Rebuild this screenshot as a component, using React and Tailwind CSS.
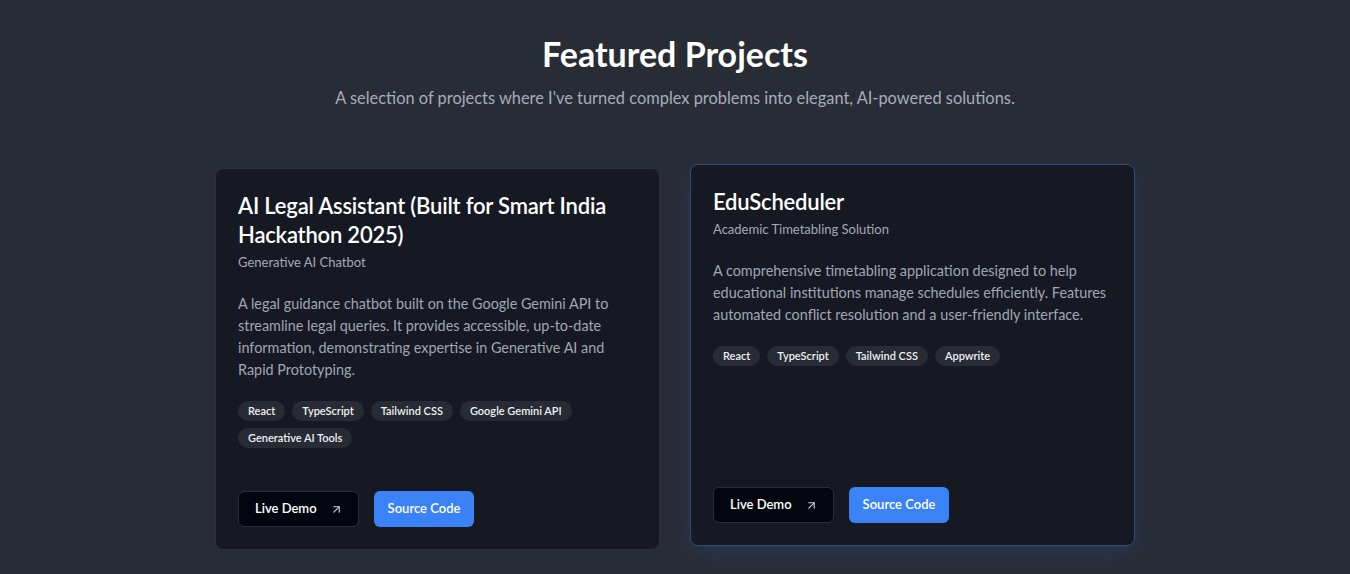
import React from "react";
import { ArrowUpRight } from "lucide-react";

const projects = [
  {
    title: "AI Legal Assistant (Built for Smart India Hackathon 2025)",
    subtitle: "Generative AI Chatbot",
    desc: "A legal guidance chatbot built on the Google Gemini API to streamline legal queries. It provides accessible, up-to-date information, demonstrating expertise in Generative AI and Rapid Prototyping.",
    tags: ["React", "TypeScript", "Tailwind CSS", "Google Gemini API", "Generative AI Tools"],
    active: false,
  },
  {
    title: "EduScheduler",
    subtitle: "Academic Timetabling Solution",
    desc: "A comprehensive timetabling application designed to help educational institutions manage schedules efficiently. Features automated conflict resolution and a user-friendly interface.",
    tags: ["React", "TypeScript", "Tailwind CSS", "Appwrite"],
    active: true,
  },
];

function Card({ p }) {
  return (
    <div
      className={
        "flex flex-col rounded-lg border bg-[#161922] px-[22px] pt-[22px] pb-[22px] " +
        (p.active
          ? "-translate-y-1 border-[#2c4c8a] shadow-[0_8px_24px_rgba(59,130,246,0.12)]"
          : "border-[#2e323c]")
      }
    >
      <h3 className="text-[22px] leading-[29px] font-semibold tracking-[-0.2px] text-white">{p.title}</h3>
      <p className="mt-[3px] text-[13px] leading-5 text-[#a3aab6]">{p.subtitle}</p>
      <p className="mt-[21px] text-[14.4px] leading-[22px] text-[#a0a6b2]">{p.desc}</p>
      <div className="mt-5 flex flex-wrap gap-x-[7px] gap-y-[7px]">
        {p.tags.map((t) => (
          <span
            key={t}
            className="rounded-full bg-[#272b34] px-[10px] text-[11px] leading-[20px] font-semibold text-[#eef0f3]"
          >
            {t}
          </span>
        ))}
      </div>
      <div className="mt-auto flex items-center gap-[15px] pt-[43px]">
        <button className="flex h-[36px] items-center gap-[13px] rounded-md border border-[#2a2e38] bg-[#03060f] pl-4 pr-[15px] text-[13px] font-semibold text-white">
          Live Demo
          <ArrowUpRight size={13} strokeWidth={2} className="text-gray-300" />
        </button>
        <button className="h-[36px] rounded-md bg-[#3b82f6] px-[14px] text-[13px] font-semibold text-white">
          Source Code
        </button>
      </div>
    </div>
  );
}

export default function App() {
  return (
    <div
      className="min-h-[574px] w-full bg-[#282c35] pt-[34px]"
      style={{ fontFamily: "Lato, 'Noto Sans', sans-serif" }}
    >
      <div className="flex flex-col items-center">
        <h2 className="text-[34px] leading-[40px] font-bold text-white">Featured Projects</h2>
        <p className="mt-3 text-[16.4px] leading-6 text-[#a7adb9]">
          A selection of projects where I've turned complex problems into elegant, AI-powered solutions.
        </p>
      </div>
      <div className="mx-auto mt-[58px] grid w-[920px] grid-cols-2 gap-[30px]">
        {projects.map((p) => (
          <Card key={p.title} p={p} />
        ))}
      </div>
    </div>
  );
}
